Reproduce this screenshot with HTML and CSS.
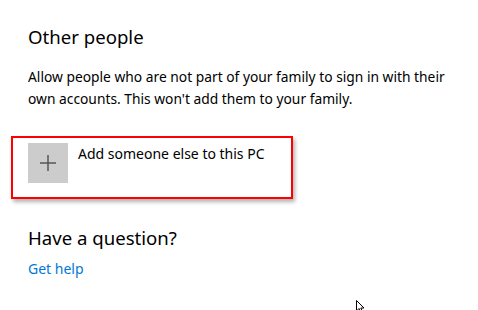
FILE: index.html
```html
<!DOCTYPE html>
<html lang="en">
<head>
<meta charset="utf-8">
<title>Other people</title>
<link rel="stylesheet" href="styles.css">
</head>
<body>
<main class="page">
  <section class="other">
    <h2 class="title">Other people</h2>
    <p class="desc">Allow people who are not part of your family to sign in with their<br>own accounts. This won't add them to your family.</p>
    <div class="add-frame">
      <div class="add-row">
        <span class="tile">
          <svg width="40" height="40" viewBox="0 0 40 40" aria-hidden="true">
            <path d="M20 12 V28 M12 20 H28" stroke="#555" stroke-width="1.5" fill="none"/>
          </svg>
        </span>
        <span class="add-label">Add someone else to this PC</span>
      </div>
    </div>
  </section>
  <section class="help">
    <h2 class="title">Have a question?</h2>
    <a class="link" href="#">Get help</a>
  </section>
  <svg class="cursor" width="12" height="14" viewBox="0 0 12 14" aria-hidden="true">
    <path d="M1.5 1.5 V12 L4 9.5 L6 13 L7.5 12.3 L5.8 9 H9 Z" fill="#fff" stroke="#000" stroke-width="1"/>
  </svg>
</main>
</body>
</html>
```
FILE: styles.css
```css
html, body {
  margin: 0;
  padding: 0;
  background: #fff;
}
body {
  font-family: "Noto Sans", "Open Sans", sans-serif;
  color: #000;
  width: 478px;
  height: 310px;
  overflow: hidden;
}
.page {
  position: relative;
  height: 310px;
  padding: 24px 0 0 0;
  box-sizing: border-box;
}
.title {
  margin: 0;
  font-weight: 400;
  font-size: 18.6px;
  line-height: 26px;
  padding-left: 28px;
}
.desc {
  margin: 16px 0 0 0;
  padding-left: 28px;
  font-size: 13.8px;
  line-height: 22px;
}
.add-frame {
  margin: 26px 0 0 11px;
  width: 278px;
  height: 59px;
  border: 2px solid #ff0000;
  box-shadow: 2px 3px 4px rgba(0, 0, 0, 0.3);
  box-sizing: content-box;
}
.add-row {
  display: flex;
  align-items: flex-start;
  gap: 10px;
  padding: 5px 0 0 15px;
}
.tile {
  width: 40px;
  height: 40px;
  background: #cccccc;
  display: block;
}
.tile svg {
  display: block;
}
.add-label {
  font-size: 14px;
  line-height: 20px;
  margin-top: 1px;
}
.help {
  margin-top: 26px;
}
.link {
  display: inline-block;
  margin: 8px 0 0 28px;
  font-size: 14px;
  line-height: 20px;
  color: #0078d7;
  text-decoration: none;
}
.cursor {
  position: absolute;
  left: 355px;
  top: 299px;
}
```
